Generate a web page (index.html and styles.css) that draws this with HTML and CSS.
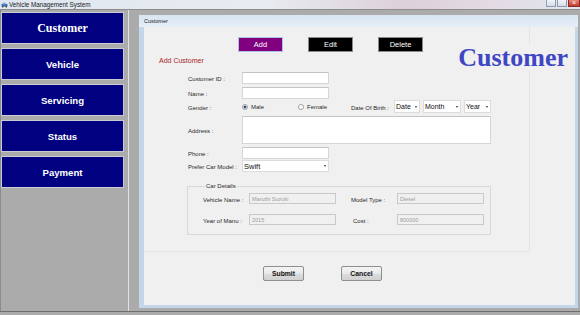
FILE: index.html
```html
<!DOCTYPE html>
<html lang="en">
<head>
  <meta charset="UTF-8">
  <title>Vehicle Management System</title>
  <link rel="stylesheet" href="styles.css">
</head>
<body>
  <div class="window">
    <div class="titlebar">
      <svg class="app-icon" width="7" height="6" viewBox="0 0 7 6">
        <rect x="0.5" y="2" width="6" height="2.5" rx="0.6" fill="#3a6db5"/>
        <rect x="1.5" y="0.8" width="3.6" height="1.6" rx="0.5" fill="#7aa6dc"/>
        <circle cx="1.8" cy="4.8" r="0.8" fill="#222"/>
        <circle cx="5.2" cy="4.8" r="0.8" fill="#222"/>
      </svg>
      <span class="title">Vehicle Management System</span>
      <div class="controls">
        <span class="ctl ctl-min"></span>
        <span class="ctl ctl-max"></span>
        <span class="ctl ctl-close">×</span>
      </div>
    </div>

    <div class="workspace">
      <nav class="sidebar">
        <button class="nav-btn nav-active">Customer</button>
        <button class="nav-btn">Vehicle</button>
        <button class="nav-btn">Servicing</button>
        <button class="nav-btn">Status</button>
        <button class="nav-btn">Payment</button>
      </nav>

      <div class="mdi">
        <div class="child">
          <div class="child-title">Customer</div>
          <div class="child-body">
            <div class="panel">
              <div class="actions">
                <button class="act act-add">Add</button>
                <button class="act">Edit</button>
                <button class="act">Delete</button>
              </div>

              <div class="form-head">
                <span class="section-title">Add Customer</span>
                <h1>Customer</h1>
              </div>

              <div class="fields">
                <div class="row row-gap3">
                  <label class="lbl">Customer ID :</label>
                  <input class="txt" type="text">
                </div>
                <div class="row row-gap1">
                  <label class="lbl">Name :</label>
                  <input class="txt" type="text">
                </div>
                <div class="row row-gap3">
                  <label class="lbl">Gender :</label>
                  <span class="radio radio-male"><i class="dot dot-on"></i>Male</span>
                  <span class="radio radio-female"><i class="dot"></i>Female</span>
                  <label class="lbl lbl-dob">Date Of Birth :</label>
                  <div class="combo combo-date"><span>Date</span><i class="caret"></i></div>
                  <div class="combo combo-month"><span>Month</span><i class="caret"></i></div>
                  <div class="combo combo-year"><span>Year</span><i class="caret"></i></div>
                </div>
                <div class="row row-gap3">
                  <label class="lbl">Address :</label>
                  <textarea class="area"></textarea>
                </div>
                <div class="row row-gap1">
                  <label class="lbl">Phone :</label>
                  <input class="txt" type="text">
                </div>
                <div class="row">
                  <label class="lbl">Prefer Car Model :</label>
                  <div class="combo combo-model"><span>Swift</span><i class="caret"></i></div>
                </div>
              </div>

              <fieldset class="group">
                <legend>Car Details</legend>
                <div class="group-grid">
                  <label class="lbl">Vehicle Name :</label>
                  <input class="txt txt-off" type="text" value="Maruthi Suzuki" disabled>
                  <label class="lbl lbl-right">Model Type :</label>
                  <input class="txt txt-off" type="text" value="Diesel" disabled>
                  <label class="lbl">Year of Manu :</label>
                  <input class="txt txt-off" type="text" value="2015" disabled>
                  <label class="lbl lbl-right lbl-cost">Cost :</label>
                  <input class="txt txt-off" type="text" value="800000" disabled>
                </div>
              </fieldset>
            </div>

            <div class="footer">
              <button class="win-btn">Submit</button>
              <button class="win-btn">Cancel</button>
            </div>
          </div>
        </div>
      </div>
    </div>
    <div class="bottom"></div>
  </div>
</body>
</html>
```

FILE: styles.css
```css
body {
  margin: 0;
  font-family: "Liberation Sans", Arial, sans-serif;
  background: #ababab;
}
.window {
  width: 580px;
  height: 315px;
  overflow: hidden;
  display: flex;
  flex-direction: column;
}

/* title bar */
.titlebar {
  height: 10px;
  box-sizing: border-box;
  display: flex;
  align-items: center;
  background: linear-gradient(to right, #dfe6ef 0%, #e8ecf1 45%, #dcd0da 70%, #e3dbe4 85%, #dfe6ee 100%);
  border-bottom: 1px solid #8d8d8d;
}
.app-icon {
  margin-left: 1px;
}
.title {
  margin-left: 1px;
  font-size: 6.3px;
  color: #1c1c1c;
}
.controls {
  margin-left: auto;
  align-self: flex-start;
  display: flex;
  gap: 1px;
}
.ctl {
  display: block;
  width: 10px;
  height: 7px;
  box-sizing: border-box;
  border: 1px solid #8e9cae;
  border-top: none;
  background: linear-gradient(#f1f4f8, #d6dde7);
}
.ctl-close {
  width: 12px;
  border-color: #8a2a22;
  background: linear-gradient(#e8877a, #c5392a);
  color: #fff;
  font-size: 7px;
  line-height: 6px;
  text-align: center;
}

/* workspace */
.workspace {
  height: 301px;
  display: flex;
  background: #ababab;
}
.sidebar {
  width: 129px;
  box-sizing: border-box;
  border-left: 1px solid #8c8c8c;
  border-right: 1px solid #e2e2e2;
  padding-top: 2px;
  display: flex;
  flex-direction: column;
  gap: 4px;
}
.nav-btn {
  width: 123px;
  height: 32px;
  margin: 0;
  padding: 0;
  background: #000080;
  border: 1px solid #c9c9d6;
  color: #fff;
  font-family: "Liberation Sans", Arial, sans-serif;
  font-weight: bold;
  font-size: 9.6px;
}
.nav-active {
  font-family: "Liberation Serif", "Times New Roman", serif;
  font-size: 12px;
}

.mdi {
  flex: 1;
  padding: 5px 2px 3px 10px;
}
.child {
  height: 100%;
  display: flex;
  flex-direction: column;
  background: #c3d6ea;
}
.child-title {
  height: 12px;
  padding-left: 5px;
  background: linear-gradient(#d9e5f3, #e6eef7);
  font-size: 5.5px;
  line-height: 13px;
  color: #1c1c1c;
}
.child-body {
  flex: 1;
  margin: 0 3px 3px 5px;
  background: #f0f0f0;
  display: flex;
  flex-direction: column;
}

.panel {
  width: 386px;
  height: 225px;
  box-sizing: border-box;
  border-right: 1px solid #e4e4e4;
  border-bottom: 1px solid #e4e4e4;
  padding-top: 10px;
}
.actions {
  display: flex;
  gap: 25px;
  padding-left: 94px;
}
.act {
  width: 45px;
  height: 15px;
  margin: 0;
  padding: 0;
  background: #000;
  border: 1px solid #8a8a8a;
  color: #fff;
  font-family: "Liberation Sans", Arial, sans-serif;
  font-size: 7.5px;
}
.act-add {
  background: #800080;
  border-color: #a9c4e2;
}

.form-head {
  width: 427px;
  margin-top: -7px;
  padding-left: 15px;
  box-sizing: border-box;
  display: flex;
  justify-content: space-between;
  align-items: flex-start;
}
.section-title {
  margin-top: 12px;
  font-size: 7px;
  line-height: 7px;
  color: #a8262a;
}
/* the big caption label has the form colour behind it, like a WinForms label */
h1 {
  margin: 0;
  padding: 0 3px;
  background: #f0f0f0;
  font-family: "Liberation Serif", "Times New Roman", serif;
  font-size: 26px;
  line-height: 26px;
  color: #3f46c4;
}

.fields {
  margin-top: 1px;
  padding-left: 44px;
}
.row {
  display: flex;
  align-items: center;
}
.row-gap1 {
  margin-bottom: 1px;
}
.row-gap3 {
  margin-bottom: 3px;
}
.lbl {
  width: 54px;
  flex: none;
  padding-top: 2px;
  font-size: 6px;
  color: #2a2a2a;
}
.txt {
  width: 87px;
  height: 12px;
  box-sizing: border-box;
  margin: 0;
  padding: 0 2px;
  border: 1px solid #d6d6d6;
  border-top-color: #c4c4c4;
  background: #fff;
  font-family: "Liberation Sans", Arial, sans-serif;
  font-size: 5.5px;
}
.txt-off {
  height: 11px;
  background: #f0f0f0;
  border-color: #c9c9c9;
  color: #9c9c9c;
}
.area {
  width: 249px;
  height: 28px;
  box-sizing: border-box;
  margin: 0;
  border: 1px solid #d6d6d6;
  border-top-color: #c4c4c4;
  background: #fff;
  resize: none;
}

.radio {
  display: flex;
  align-items: center;
  gap: 3px;
  padding-top: 1px;
  font-size: 6px;
  color: #2a2a2a;
}
.radio-male {
  width: 56px;
}
.radio-female {
  width: 53px;
}
.dot {
  width: 4px;
  height: 4px;
  border: 1px solid #a0a0a0;
  border-radius: 50%;
  background: #fff;
}
.dot-on {
  background: radial-gradient(circle, #29497e 45%, #fff 60%);
}
.lbl-dob {
  width: 43px;
}
.combo {
  height: 13px;
  box-sizing: border-box;
  display: flex;
  align-items: center;
  justify-content: space-between;
  padding: 0 2px 0 1px;
  margin-right: 3px;
  background: #fff;
  border: 1px solid #dcdcdc;
  font-size: 7px;
  color: #111;
}
.combo-date {
  width: 26px;
}
.combo-month {
  width: 38px;
}
.combo-year {
  width: 27px;
  margin-right: 0;
}
.combo-model {
  width: 87px;
  height: 12px;
  font-size: 7.5px;
}
.caret {
  width: 0;
  height: 0;
  border-left: 1.5px solid transparent;
  border-right: 1.5px solid transparent;
  border-top: 2px solid #333;
}

/* Car Details group box */
.group {
  width: 304px;
  height: 52px;
  box-sizing: border-box;
  margin: 11px 0 0 43px;
  padding: 4px 0 0 15px;
  border: 1px solid #d8d8d8;
}
.group legend {
  margin-left: 2px;
  padding: 0 1px;
  font-size: 6px;
  line-height: 6px;
  color: #2a2a2a;
}
.group-grid {
  display: grid;
  grid-template-columns: 46px 85px 63px 84px;
  row-gap: 10px;
  align-items: center;
}
.group-grid .lbl {
  width: auto;
}
.group-grid .lbl-right {
  padding-left: 17px;
}
.group-grid .lbl-cost {
  padding-left: 19px;
}

.footer {
  display: flex;
  gap: 37px;
  padding-left: 119px;
  margin-top: 14px;
}
.win-btn {
  width: 41px;
  height: 15px;
  margin: 0;
  padding: 0;
  border: 1px solid #8e8f8f;
  border-radius: 2px;
  background: linear-gradient(#f4f4f4 0%, #e9e9e9 50%, #dcdcdc 51%, #d1d1d1 100%);
  font-family: "Liberation Sans", Arial, sans-serif;
  font-weight: bold;
  font-size: 6.8px;
  color: #111;
}

.bottom {
  flex: 1;
  border-top: 1px solid #6e6e6e;
  background: #ababab;
}
```
